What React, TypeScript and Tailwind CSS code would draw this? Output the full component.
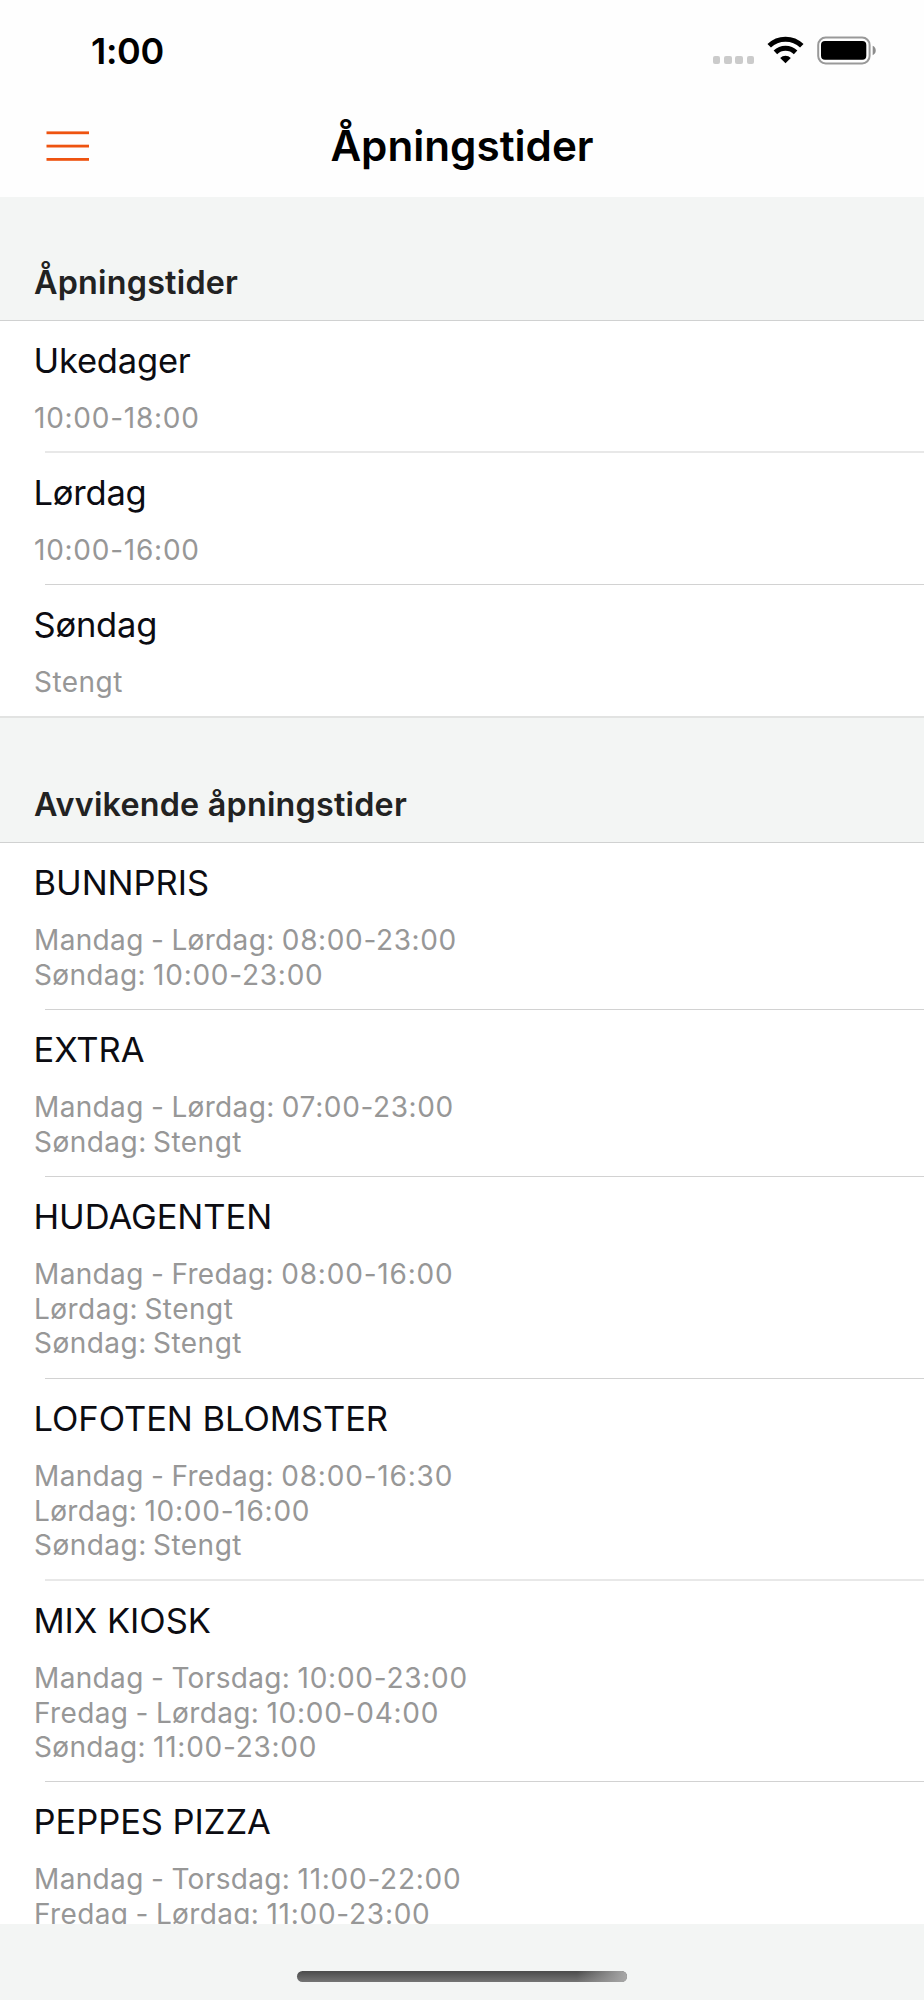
import React from 'react';

type Line = { label?: string; time?: string };
type Row = { title: string; lines: Line[]; height: string; separator: string };

const THIN = 'ml-[45px] h-px bg-[#d2d2d2]';
const SOFT = 'ml-[45px] h-[2px] bg-[#e8e8e8]';
const FULL = 'h-[2px] bg-[#e2e3e2]';

const regular: Row[] = [
  { title: 'Ukedager', lines: [{ time: '10:00-18:00' }], height: 'h-[132px]', separator: SOFT },
  { title: 'Lørdag', lines: [{ time: '10:00-16:00' }], height: 'h-[132px]', separator: THIN },
  { title: 'Søndag', lines: [{ label: 'Stengt' }], height: 'h-[133px]', separator: FULL },
];

const deviating: Row[] = [
  {
    title: 'BUNNPRIS',
    lines: [
      { label: 'Mandag - Lørdag: ', time: '08:00-23:00' },
      { label: 'Søndag: ', time: '10:00-23:00' },
    ],
    height: 'h-[167px]',
    separator: THIN,
  },
  {
    title: 'EXTRA',
    lines: [{ label: 'Mandag - Lørdag: ', time: '07:00-23:00' }, { label: 'Søndag: Stengt' }],
    height: 'h-[167px]',
    separator: THIN,
  },
  {
    title: 'HUDAGENTEN',
    lines: [
      { label: 'Mandag - Fredag: ', time: '08:00-16:00' },
      { label: 'Lørdag: Stengt' },
      { label: 'Søndag: Stengt' },
    ],
    height: 'h-[202px]',
    separator: THIN,
  },
  {
    title: 'LOFOTEN BLOMSTER',
    lines: [
      { label: 'Mandag - Fredag: ', time: '08:00-16:30' },
      { label: 'Lørdag: ', time: '10:00-16:00' },
      { label: 'Søndag: Stengt' },
    ],
    height: 'h-[202px]',
    separator: SOFT,
  },
  {
    title: 'MIX KIOSK',
    lines: [
      { label: 'Mandag - Torsdag: ', time: '10:00-23:00' },
      { label: 'Fredag - Lørdag: ', time: '10:00-04:00' },
      { label: 'Søndag: ', time: '11:00-23:00' },
    ],
    height: 'h-[201px]',
    separator: THIN,
  },
  {
    title: 'PEPPES PIZZA',
    lines: [
      { label: 'Mandag - Torsdag: ', time: '11:00-22:00' },
      { label: 'Fredag - Lørdag: ', time: '11:00-23:00' },
    ],
    height: 'h-[201px]',
    separator: THIN,
  },
];

function StatusBar() {
  return (
    <div className="flex h-[100px] items-start justify-between pl-[91px] pr-[46px]">
      <span className="pt-[29px] text-[36px] leading-[44px] font-semibold tracking-[-0.3px]">1:00</span>
      <div className="flex pt-[35px]">
        <div className="mt-[21px] flex gap-[3.7px]">
          {[0, 1, 2, 3].map((i) => (
            <span key={i} className="h-[7.5px] w-[7.5px] rounded-[2px] bg-[#cbcbcb]" />
          ))}
        </div>
        <svg className="ml-[13px]" width="37" height="30" viewBox="0 0 37 30">
          <g fill="none" stroke="#000" strokeWidth="5">
            <path d="M2.2 10.8 A23.3 23.3 0 0 1 34.8 10.8" />
            <path d="M8.4 17.4 A14.4 14.4 0 0 1 28.6 17.4" />
          </g>
          <path d="M18.5 28.2 L13.2 22.9 A7.6 7.6 0 0 1 23.8 22.9 Z" />
        </svg>
        <svg className="ml-[12px]" width="62" height="30" viewBox="0 0 62 30">
          <rect x="2.2" y="2.5" width="51.4" height="26" rx="7.5" fill="none" stroke="#999" strokeWidth="2" />
          <rect x="5" y="6" width="45.3" height="18.8" rx="4" />
          <path d="M56.7 10.8 C60.8 12.4 60.8 18.6 56.7 20.2 Z" fill="#8c8c8c" />
        </svg>
      </div>
    </div>
  );
}

function MenuIcon() {
  return (
    <svg width="44" height="31" viewBox="0 0 44 31" fill="#ee5310">
      <rect x="0.5" y="0.4" width="42.5" height="2.8" />
      <rect x="0.5" y="13.7" width="42.5" height="2.8" />
      <rect x="0.5" y="27" width="42.5" height="2.8" />
    </svg>
  );
}

function SectionHeader({ children, height }: { children: string; height: string }) {
  return (
    <div className={`flex items-end border-b border-[#d0d1d1] pb-[15px] pl-[34px] ${height}`}>
      <h2 className="text-[32.3px] leading-[44px] font-semibold tracking-[0.22px] text-[#222]">{children}</h2>
    </div>
  );
}

function timeTracking(time: string) {
  if (time.startsWith('1')) return 'tracking-[0.75px]';
  return time.includes('-1') ? 'tracking-[0.8px]' : 'tracking-[0.63px]';
}

function HoursLine({ label, time }: Line) {
  return (
    <p className="whitespace-pre">
      {label && (
        <span className={time ? 'tracking-[0.35px] [word-spacing:-1px]' : 'tracking-[0.47px] [word-spacing:-2px]'}>
          {label}
        </span>
      )}
      {time && <span className={timeTracking(time)}>{time}</span>}
    </p>
  );
}

function HoursRow({ row }: { row: Row }) {
  const caps = row.title === row.title.toUpperCase();
  return (
    <li className={`flex flex-col bg-white ${row.height}`}>
      <h3
        className={`pt-[18.5px] pl-[33.5px] text-[34.5px] leading-[42px] text-[#0c0c12] ${
          caps ? 'tracking-[-0.05px]' : 'tracking-[-0.2px]'
        }`}
      >
        {row.title}
      </h3>
      <div className="flex-1 pt-[19.5px] pl-[34px] text-[28px] leading-[34.5px] text-[#979797]">
        {row.lines.map((line, i) => (
          <HoursLine key={i} {...line} />
        ))}
      </div>
      <div className={row.separator} />
    </li>
  );
}

export default function App() {
  return (
    <div className="flex h-[2000px] w-[924px] flex-col overflow-hidden bg-[#f3f5f4] font-['Inter',sans-serif] text-black">
      <header className="h-[197px] shrink-0 bg-[#fefefe]">
        <StatusBar />
        <div className="grid h-[97px] grid-cols-[1fr_auto_1fr] items-start">
          <button className="mt-[31px] ml-[46px] w-[44px]" aria-label="Meny">
            <MenuIcon />
          </button>
          <h1 className="pt-[20px] text-[42.2px] leading-[52px] font-semibold">Åpningstider</h1>
        </div>
      </header>
      <main className="h-[1727px] shrink-0 overflow-hidden">
        <SectionHeader height="h-[124px]">Åpningstider</SectionHeader>
        <ul>
          {regular.map((row) => (
            <HoursRow key={row.title} row={row} />
          ))}
        </ul>
        <SectionHeader height="h-[125px]">Avvikende åpningstider</SectionHeader>
        <ul>
          {deviating.map((row) => (
            <HoursRow key={row.title} row={row} />
          ))}
        </ul>
      </main>
      <footer className="flex flex-1 justify-center pt-[47px]">
        <div className="h-[11px] w-[330px] rounded-full bg-linear-to-b from-[#4b4b4b] to-[#757575]">
          <div className="ml-auto h-full w-[50px] rounded-r-full bg-linear-to-r from-[#a8a8a8]/0 to-[#a8a8a8]" />
        </div>
      </footer>
    </div>
  );
}
